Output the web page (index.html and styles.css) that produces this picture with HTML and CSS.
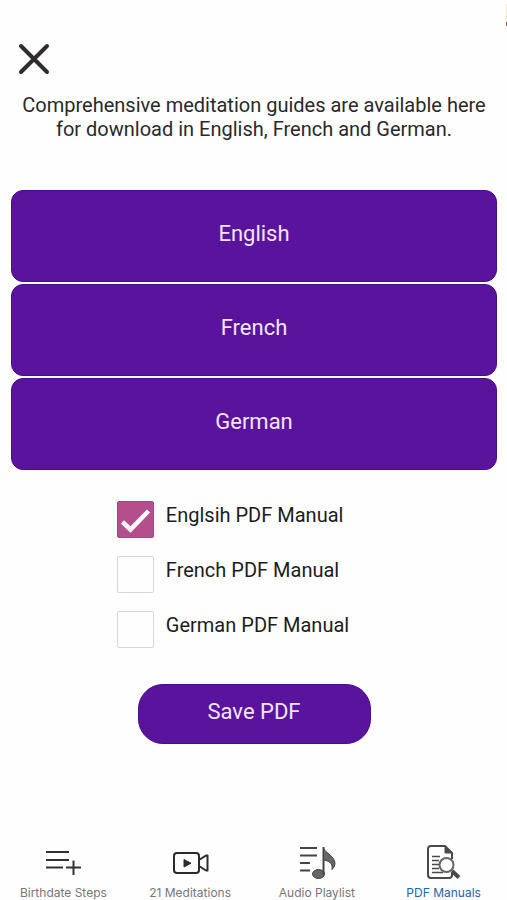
FILE: index.html
```html
<!DOCTYPE html>
<html lang="en">
<head>
<meta charset="utf-8">
<meta name="viewport" content="width=device-width, initial-scale=1">
<title>PDF Manuals</title>
<link rel="stylesheet" href="styles.css">
</head>
<body>
<span class="edge-mark" aria-hidden="true"></span>
<header class="top">
  <button class="close" type="button" aria-label="Close">
    <svg width="32" height="32" viewBox="0 0 32 32" fill="none" stroke="#2e2c2d" stroke-width="4" stroke-linecap="round"><path d="M3 3 29 29M29 3 3 29"/></svg>
  </button>
</header>
<main class="content">
  <p class="intro">Comprehensive meditation guides are available here for download in English, French and German.</p>
  <div class="languages">
    <button class="language" type="button">English</button>
    <button class="language" type="button">French</button>
    <button class="language" type="button">German</button>
  </div>
  <form class="manuals">
    <div class="options">
      <label class="option"><input class="box" type="checkbox" checked><span>Englsih PDF Manual</span></label>
      <label class="option"><input class="box" type="checkbox"><span>French PDF Manual</span></label>
      <label class="option"><input class="box" type="checkbox"><span>German PDF Manual</span></label>
    </div>
    <button class="save" type="button">Save PDF</button>
  </form>
</main>
<nav class="tabs">
  <a class="tab" href="#steps">
    <svg width="40" height="40" viewBox="0 0 40 40" fill="none" stroke="#333" stroke-width="2"><path d="M3 11H26M3 19H26M3 26.500H20M23 26.500H38M30.500 19.500V34"/></svg>
    <span>Birthdate Steps</span>
  </a>
  <a class="tab" href="#meditations">
    <svg width="40" height="40" viewBox="0 0 40 40" fill="none" stroke="#2b2b2b" stroke-width="2" stroke-linejoin="round"><rect x="4" y="12" width="25" height="20" rx="3"/><path d="M29 19 36 14.500H37.500V29.500H36L29 25"/><path d="M14 18.500V26L21 22.200Z" fill="#2b2b2b" stroke-width="1"/></svg>
    <span>21 Meditations</span>
  </a>
  <a class="tab" href="#playlist">
    <svg width="40" height="40" viewBox="0 0 40 40" fill="none" stroke="#444" stroke-width="2"><path d="M3 7H20M3 14.500H20M3 22H13M3 29.500H13"/><ellipse cx="21.500" cy="33" rx="6" ry="4.500" fill="#666" stroke-width="1"/><path d="M26.500 33V6"/><path d="M26.500 7C28 12 38 15 38 22.500Q38 26 35 28.500C36 22 32 20 26.500 19Z" fill="#666" stroke-width="1"/></svg>
    <span>Audio Playlist</span>
  </a>
  <a class="tab current" href="#manuals" aria-current="page">
    <svg width="40" height="40" viewBox="0 0 40 40" fill="none" stroke="#4a4a4a" stroke-width="2"><path d="M28 31V34Q28 37 25 37H7Q4 37 4 34V8Q4 5 7 5H21L28 12V18"/><path d="M21 5V12H28Z" fill="#4a4a4a" stroke-width="1"/><path d="M8 15.500H16M8 19.500H15M8 23.500H15M8 27.500H15M8 31.500H19" stroke-width="1.500"/><circle cx="22.500" cy="24" r="7" fill="#fff" stroke="#666"/><path d="M28 30 35 36.500" stroke-width="4"/></svg>
    <span>PDF Manuals</span>
  </a>
</nav>
</body>
</html>
```
FILE: styles.css
```css
* { box-sizing: border-box; }

body {
  margin: 0;
  min-height: 100vh;
  display: flex;
  flex-direction: column;
  background: #fefefe;
  color: #2b292a;
  font-family: Roboto, "Liberation Sans", sans-serif;
}

button { font: inherit; border: 0; padding: 0; cursor: pointer; }
svg { display: block; }

.edge-mark {
  position: absolute;
  top: 4px;
  right: 0;
  width: 1px;
  height: 22px;
  background: linear-gradient(#f3ecc0 80%, #96644a 80%);
}

.top { padding: 43px 18px 0; }
.close { background: none; display: block; }

.content { flex: 1; padding: 0 10px 0 11px; }

.intro {
  margin: 18px 0 0;
  text-align: center;
  font-size: 20px;
  line-height: 24px;
}

.languages {
  display: grid;
  gap: 2px;
  margin-top: 49px;
}

.language, .save {
  background: #5a139d;
  color: #f2e4fa;
  border: 1px solid #4b0b8c;
}

.language {
  height: 92px;
  padding-bottom: 6px;
  border-radius: 12px;
  font-size: 22px;
}

.manuals {
  display: flex;
  flex-direction: column;
  align-items: center;
  margin-top: 31px;
}

.options {
  display: grid;
  gap: 18px;
  margin-right: 42px;
}

.option {
  display: flex;
  gap: 12px;
  font-size: 20px;
  line-height: 28px;
  color: #1c1c1c;
}

.box {
  appearance: none;
  width: 37px;
  height: 37px;
  margin: 0;
  border: 1px solid #d5d5df;
  border-radius: 2px;
  background: #fefefe;
}

.box:checked {
  border-color: #a94781;
  background: #b44e8c url("data:image/svg+xml,%3Csvg xmlns='http://www.w3.org/2000/svg' viewBox='0 0 35 35'%3E%3Cpath d='M4.500 20 12.500 27.500 30.500 9' fill='none' stroke='white' stroke-width='4.500'/%3E%3C/svg%3E") center / 100% no-repeat;
}

.save {
  width: 233px;
  height: 60px;
  margin-top: 36px;
  padding-bottom: 6px;
  border-radius: 25px;
  font-size: 22px;
}

.tabs {
  display: grid;
  grid-template-columns: repeat(4, 1fr);
}

.tab {
  display: flex;
  flex-direction: column;
  align-items: center;
  gap: 5px;
  color: #777;
  font-family: Inter, Roboto, sans-serif;
  font-size: 12px;
  line-height: 14px;
  text-decoration: none;
  white-space: nowrap;
}

.tab.current { color: #2463b4; }
```
